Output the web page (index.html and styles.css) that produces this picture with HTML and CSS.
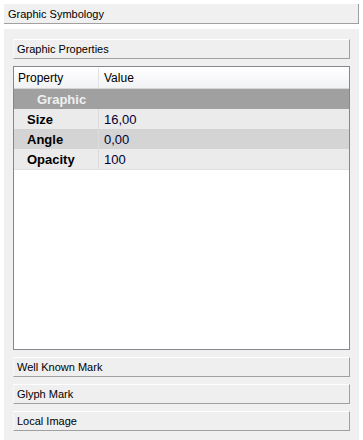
FILE: index.html
```html
<!DOCTYPE html>
<html lang="en">
<head>
    <meta charset="UTF-8">
    <meta name="viewport" content="width=device-width, initial-scale=1.0">
    <title>Graphic Symbology</title>
    <link rel="stylesheet" href="styles.css">
</head>
<body>

    <div class="top-header">Graphic Symbology</div>

    <div class="panel">
        <div class="section-header">Graphic Properties</div>

        <div class="grid">
            <div class="grid-head">
                <div class="col-name">Property</div>
                <div class="col-value">Value</div>
            </div>
            <div class="grid-group">Graphic</div>
            <div class="grid-row">
                <div class="col-name">Size</div>
                <div class="col-value">16,00</div>
            </div>
            <div class="grid-row alt">
                <div class="col-name">Angle</div>
                <div class="col-value">0,00</div>
            </div>
            <div class="grid-row">
                <div class="col-name">Opacity</div>
                <div class="col-value">100</div>
            </div>
        </div>

        <div class="section-header">Well Known Mark</div>
        <div class="section-header">Glyph Mark</div>
        <div class="section-header">Local Image</div>
    </div>

</body>
</html>
```

FILE: styles.css
```css
body {
    margin: 0;
    background-color: #fff;
    font-family: 'Liberation Sans', Arial, sans-serif;
    font-size: 11px;
    color: #000;
}
.top-header {
    margin: 4px 0 0 4px;
    width: 350px;
    height: 18px;
    line-height: 18px;
    padding: 1px 0 0 4px;
    background-color: #f0f0f0;
    border-right: 1px solid #a0a0a0;
    border-bottom: 1px solid #a0a0a0;
}
.panel {
    margin: 5px 0 0 4px;
    width: 337px;
    height: 401px;
    padding: 10px 9px 0 9px;
    background-color: #f0f0f0;
    display: flex;
    flex-direction: column;
    gap: 7px;
}
.section-header {
    height: 18px;
    line-height: 19px;
    padding-left: 3px;
    background-color: #efefef;
    border-top: 1px solid #fff;
    border-left: 1px solid #f7f7f7;
    border-right: 1px solid #a0a0a0;
    border-bottom: 1px solid #a0a0a0;
}

/* property grid */
.grid {
    height: 282px;
    border: 1px solid #828790;
    background-color: #fff;
}
.grid-head {
    display: flex;
    height: 20px;
    line-height: 20px;
    padding-top: 1px;
    font-size: 12px;
    background: linear-gradient(#ffffff, #f1f2f4);
    border-bottom: 1px solid #d5d5d5;
}
.grid-head .col-name {
    width: 80px;
    padding-left: 4px;
    border-right: 1px solid #e3e3e3;
}
.grid-head .col-value {
    padding-left: 5px;
}
.grid-group {
    height: 20px;
    line-height: 21px;
    padding-left: 23px;
    background-color: #a0a0a0;
    color: #f0f0f0;
    font-size: 13px;
    font-weight: bold;
}
.grid-row {
    display: flex;
    height: 20px;
    line-height: 21px;
    font-size: 13px;
    background-color: #ebebeb;
}
.grid-row.alt {
    background-color: #d4d4d4;
}
.grid-row:last-child {
    border-bottom: 1px solid #e0e0e0;
}
.grid-row .col-name {
    width: 71px;
    padding-left: 13px;
    font-weight: bold;
    border-right: 1px solid #dcdcdc;
}
.grid-row .col-value {
    padding-left: 5px;
    color: #000033;
}
```
